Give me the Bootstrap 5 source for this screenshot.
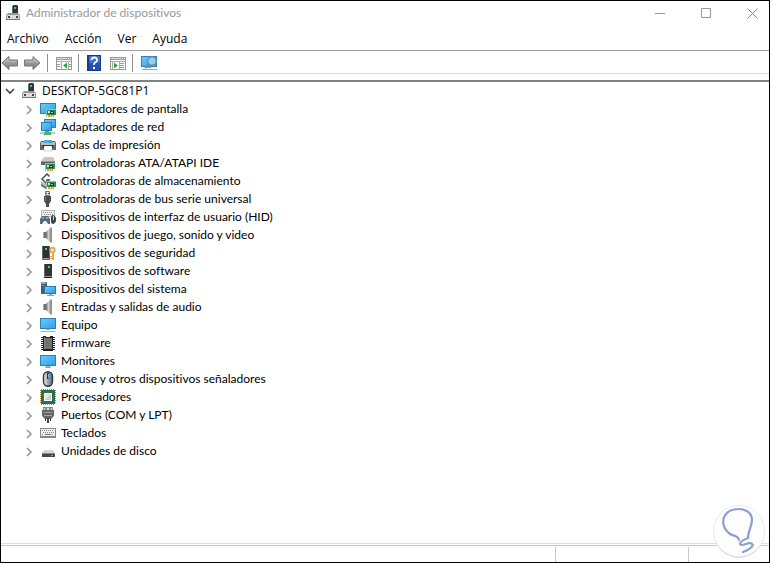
<!DOCTYPE html>
<html lang="es">
<head>
<meta charset="utf-8">
<meta name="viewport" content="width=device-width, initial-scale=1">
<title>Administrador de dispositivos</title>
<link rel="stylesheet" href="https://cdn.jsdelivr.net/npm/bootstrap@5.3.0/dist/css/bootstrap.min.css">
<style>
body { font-family: Lato, "Open Sans", sans-serif; font-size: 12px; line-height: 18px; font-variant-ligatures: none; color: #000; }
.window { border: 1px solid #000; background: #fff; }
button { border: 0; background: none; padding: 0; color: inherit; }
svg { display: block; flex: none; }
.titlebar { height: 24px; padding-left: 4px; }
.titlebar h1 { font-size: 12px; line-height: 18px; color: #999; font-weight: 400; margin-left: 5px; }
.caption-btns { margin-right: -6px; }
.caption-btn { width: 46px; height: 24px; display: flex; align-items: center; justify-content: center; }
.menubar { height: 26px; padding: 2px 6px 0; gap: 16px; border-bottom: 1px solid #a0a0a0; font-family: "Open Sans", sans-serif; }
.toolbar { height: 23px; gap: 6px; border-bottom: 1px solid #dadada; padding-top: 2px; }
.tool-sep { width: 1px; height: 18px; background: #8e8e8e; margin-right: 2px; }
.tool-gap { margin-left: 3px; }
.tree-pane { margin-top: 6px; border-top: 2px solid #828282; }
.tree-root { height: 18px; padding-left: 3px; }
.root-icon { margin: 0 5px; }
.root-label { font-family: "Open Sans", sans-serif; }
.tree-row { height: 18px; padding-left: 23px; }
.tree-row .twisty { width: 11px; margin-right: 5px; padding-top: 2px; }
.tree-row .node-icon { margin-right: 5px; }
.statusbar { height: 19px; border-top: 1px solid #dfdfdf; padding-top: 1px; }
.status-cells { border-top: 1px solid #c6c6c6; padding-top: 1px; }
.status-cell + .status-cell { border-left: 1px solid #c6c6c6; }
.cell-mid { width: 133px; }
.cell-end { width: 81px; }
.tip-badge { right: 4px; bottom: 3px; }
</style>
</head>
<body>
<svg width="0" height="0" class="position-absolute" aria-hidden="true">
<defs>
<linearGradient id="blue" x1="0" y1="0" x2="1" y2="1"><stop offset="0" stop-color="#6cc8fb"/><stop offset="1" stop-color="#2aa2f0"/></linearGradient>
<linearGradient id="metal"><stop offset="0" stop-color="#6d6d6d"/><stop offset=".5" stop-color="#d0d0d0"/><stop offset="1" stop-color="#8a8a8a"/></linearGradient>
<linearGradient id="grayArrow" x1="0" y1="0" x2="0" y2="1"><stop offset="0" stop-color="#c0c0c0"/><stop offset="1" stop-color="#777"/></linearGradient>
<linearGradient id="mouseGrad"><stop offset="0" stop-color="#eee"/><stop offset=".5" stop-color="#9aa6b3"/><stop offset="1" stop-color="#626b76"/></linearGradient>
<symbol id="chip-card" viewBox="0 0 10 8"><path fill="#2b8a55" d="M0 0h10v6H0z"/><path fill="#8cc4a2" d="M0 0h1v8H0zM1 0h9v1H1z"/><path fill="#d7e8de" d="M2 2h2v2H2z"/><path fill="#0a4a36" d="M4 2h4v3H4z"/><path fill="#8dc9b0" d="M5 3h2v1H5z"/><path fill="#f39a16" d="M2 6h6v2H2z"/><path fill="#ffc65c" d="M4 6h1v2H4zM6 6h1v2H6z"/></symbol>
<symbol id="chev" viewBox="0 0 11 12"><path d="M3 2l4 4-4 4" fill="none" stroke="#999" stroke-width="1.600"/></symbol>
<symbol id="computer" viewBox="0 0 16 16"><path fill="#333" d="M8 0h4l1 1v8H8z"/><path fill="#666" d="M7 1h1v8H7z"/><path fill="#39d353" d="M9 2h2v2H9z"/><path fill="#9a9a9a" d="M3 8h10l2 2v5H1v-5z"/><path fill="#dcdcdc" d="M2 10h12v4H2z"/><path fill="#777" d="M1 14h14v1H1z"/><path fill="#444" d="M3 11h2v2H3zM11 11h2v2h-2z"/></symbol>
<symbol id="display" viewBox="0 0 16 16"><path fill="#317fb0" d="M0 2h16v11H0z"/><path fill="url(#blue)" d="M1 3h14v9H1z"/><use href="#chip-card" x="6" y="8" width="10" height="8"/></symbol>
<symbol id="network" viewBox="0 0 16 16"><path fill="#317fb0" d="M4 0h12v9H4z"/><path fill="url(#blue)" d="M5 1h10v7H5z"/><path fill="#317fb0" d="M1 3h11v9H1z"/><path fill="url(#blue)" d="M2 4h9v7H2z"/><path fill="#a7dcb7" d="M0 13h15v2H0z"/><path fill="#4fb06f" d="M5 12h4v1h2v3H4v-3h1z"/></symbol>
<symbol id="printer" viewBox="0 0 16 16"><path fill="#666" d="M1 4h14l1 2v7H0V6z"/><path fill="#b4bcc3" d="M1 5h14v3H1z"/><path fill="#48afe5" d="M4 3h8v3H4z"/><path fill="#37aa66" d="M9 4h3v2H9z"/><path fill="#222" d="M3 8h10v3H3z"/><path fill="#fff" stroke="#aaa" stroke-width=".5" d="M4 9h8v5H4z"/></symbol>
<symbol id="ata" viewBox="0 0 16 16"><path fill="#c8c8c8" d="M4 2h9l2 4H1z"/><path fill="#606060" d="M1 6h14v4H1z"/><path fill="#999" d="M1 6h14v1H1z"/><use href="#chip-card" x="5" y="8" width="10" height="8"/></symbol>
<symbol id="storage" viewBox="0 0 16 16"><path fill="#bbb" d="M1 8l5 3v4l-5-3z"/><path fill="#666" d="M1 11l5 3v2l-5-3z"/><path fill="#fff" stroke="#4d4d4d" stroke-width="1.500" d="M9.500 3.500L7 1 2 6l4 4 3-3H6"/><use href="#chip-card" x="6" y="8" width="10" height="8"/></symbol>
<symbol id="usb" viewBox="0 0 16 16"><path fill="#ddd" stroke="#777" d="M5.500.500h4v4h-4z"/><path fill="#555" d="M6 2h1v1H6zM8 2h1v1H8z"/><path fill="#4c4c4c" d="M4 5h7v5l-2 3v3H6v-3l-2-3z"/><path fill="#777" d="M5 6h1v4H5z"/></symbol>
<symbol id="hid" viewBox="0 0 16 16"><path fill="#b7b7b7" d="M1 1h14v7H1z"/><path fill="#eee" d="M2 2h12v5H2z"/><path stroke="#888" stroke-dasharray="1 1" d="M3 3.500h10M4 5.500h9"/><path fill="#606872" d="M2 7h6l2 3v5H8l-2-3H4l-2 3H0v-5z"/><path fill="#60aee8" d="M2 8h2v2H2zM6 8h2v2H6z"/><path fill="#3f4347" d="M11 9q0-3 2-3t3 3v3q-1 3-3 3t-2-3z"/><path fill="#ccc" d="M13 7h1v4h-1z"/></symbol>
<symbol id="speaker" viewBox="0 0 16 16"><path fill="#69747b" d="M3 5h3v6H3z"/><path fill="#aaa" d="M3 5h1v6H3z"/><path fill="url(#metal)" d="M6 5l5-5v16l-5-5z"/><path fill="#8a9299" d="M11 0l1 1v14l-1 1z"/></symbol>
<symbol id="tower" viewBox="0 0 16 16"><path fill="#666" d="M4 1h8v14H4z"/><path fill="#333" d="M5 1h7v12H5z"/><path fill="#32e052" d="M8 3h2v2H8z"/><path fill="#999" d="M4 13h8v2H4z"/><path fill="#222" d="M4 14h8v1H4z"/></symbol>
<symbol id="security" viewBox="0 0 16 16"><path fill="#666" d="M2 1h8v14H2z"/><path fill="#303030" d="M3 1h6v12H3z"/><path fill="#32e052" d="M5 3h2v2H5z"/><path fill="#999" d="M2 13h7v1H2z"/><circle cx="12.500" cy="5" r="2.200" fill="#fff" stroke="#e5a850" stroke-width="2"/><path fill="#e5a850" d="M12 8h2v7h-2zM10 11h2v1h-2zM10 13h2v1h-2z"/></symbol>
<symbol id="system" viewBox="0 0 16 16"><path fill="#525b62" d="M1 1h6v12H1z"/><path fill="#9ba4aa" d="M1 1h5v2H1z"/><path fill="#35d45b" d="M2 4h2v1H2z"/><path fill="#2379ad" d="M4 5h12v8H4z"/><path fill="url(#blue)" d="M5 6h10v6H5z"/><path fill="#89a5b6" d="M9 13h3v1h2v1H7v-1h2z"/></symbol>
<symbol id="pc" viewBox="0 0 16 16"><path fill="#317fb0" d="M0 1h16v11H0z"/><path fill="url(#blue)" d="M1 2h14v9H1z"/><path fill="#9fb2c0" d="M6 12h4v1H6zM1 14h14l1 1H0z"/></symbol>
<symbol id="firmware" viewBox="0 0 16 16"><path fill="#222" d="M3 1h3v1h4V1h3v15H3z"/><path fill="#707070" d="M4 3h8v11H4z"/><path stroke="#222" stroke-width="2" stroke-dasharray="1 1" d="M2 2v13M14 2v13"/><path fill="#888" d="M4 2h1v12H4z"/></symbol>
<symbol id="monitor" viewBox="0 0 16 16"><path fill="#317fb0" d="M0 2h16v11H0z"/><path fill="url(#blue)" d="M1 3h14v9H1z"/><path fill="#8faaba" d="M6 13h4v1H6zM5 14h6v1H5z"/></symbol>
<symbol id="mouse" viewBox="0 0 16 16"><rect x="3.500" y=".7" width="9" height="14.500" rx="4.500" fill="url(#mouseGrad)" stroke="#333" stroke-width="1.400"/><path fill="#263746" d="M7 2h2v6H7z"/><path fill="#70b5e5" d="M8 3h1v4H8z"/></symbol>
<symbol id="cpu" viewBox="0 0 16 16"><path fill="none" stroke="#bd8c37" stroke-dasharray="1 1" d="M.5 1v14M15.500 1v14M1 .5h14M1 15.500h14"/><path fill="#26724a" d="M1 1h14v14H1z"/><path fill="#fff" d="M4 4h8v8H4z"/><path fill="#ccc" d="M5 5h6v6H5z"/><path fill="#e5e5e5" d="M5 5h6l-6 6z"/></symbol>
<symbol id="port" viewBox="0 0 16 16"><path fill="#888" d="M3 0h10v4H3z"/><path fill="#ddd" d="M4 1h1v2H4zM7 1h2v2H7zM11 1h1v2h-1z"/><path fill="#666" d="M2 3h12v6l-3 3H5L2 9z"/><path fill="#a4a4a4" d="M4 5h8v1H4zM4 8h8v1H4z"/><path fill="#444" d="M5 11h1v3H5zM7 11h2v5H7zM10 11h1v3h-1z"/></symbol>
<symbol id="keyboard" viewBox="0 0 16 16"><path fill="#888" d="M0 3h16v10H0z"/><path fill="#eee" d="M1 4h14v7H1z"/><path stroke="#888" stroke-dasharray="1 1" d="M2 5.500h12M3 7.500h11M2 9.500h2M12 9.500h2"/><path fill="#777" d="M5 9h6v1H5z"/></symbol>
<symbol id="disk" viewBox="0 0 16 16"><path fill="#d4d4d4" d="M4 7h9l2 3H2z"/><path fill="#474747" d="M2 10h13v4H2z"/><path fill="#888" d="M2 10h13v1H2z"/><path fill="#36d858" d="M11 12h2v1h-2z"/></symbol>
<symbol id="arrow" viewBox="0 0 17 16"><path fill="url(#grayArrow)" stroke="#777" d="M1 8l7-6.500v3.500h8.500v6H8v3.500z"/><path fill="none" stroke="#bbb" d="M3 8l4-4v2.500h8"/></symbol>
<symbol id="panel" viewBox="0 0 16 15"><path fill="#999" d="M0 1h16v13H0z"/><path fill="#fff" d="M1 4h14v9H1z"/><path fill="#ddd" d="M1 2h10v1H1z"/><path fill="#fff" d="M12 2h1v1h-1zM14 2h1v1h-1z"/><path fill="#aaa" d="M1 5h14v1H1z"/></symbol>
</defs>
</svg>

<main class="window vh-100 d-flex flex-column position-relative overflow-hidden">
  <header class="titlebar d-flex align-items-center">
    <svg width="16" height="16" aria-hidden="true"><use href="#computer"/></svg>
    <h1 class="mb-0 me-auto">Administrador de dispositivos</h1>
    <div class="caption-btns d-flex">
      <button class="caption-btn" type="button" aria-label="Minimizar"><svg width="11" height="11"><path d="M0 5.500h10" stroke="#999"/></svg></button>
      <button class="caption-btn" type="button" aria-label="Maximizar"><svg width="11" height="11"><path d="M.5.500h9v9h-9z" fill="none" stroke="#999"/></svg></button>
      <button class="caption-btn" type="button" aria-label="Cerrar"><svg width="11" height="11"><path d="M.5.500l10 10M10.500.500l-10 10" stroke="#888"/></svg></button>
    </div>
  </header>

  <nav class="menubar d-flex align-items-center" aria-label="Menú">
    <button type="button">Archivo</button>
    <button type="button">Acción</button>
    <button type="button">Ver</button>
    <button type="button">Ayuda</button>
  </nav>

  <div class="toolbar d-flex align-items-center" role="toolbar" aria-label="Herramientas">
    <button type="button" aria-label="Atrás"><svg width="17" height="16"><use href="#arrow"/></svg></button>
    <button type="button" aria-label="Adelante"><svg width="17" height="16" viewBox="0 0 17 16"><g transform="translate(17 0) scale(-1 1)"><use href="#arrow" width="17" height="16"/></g></svg></button>
    <span class="tool-sep flex-shrink-0"></span>
    <button type="button" aria-label="Mostrar u ocultar el árbol"><svg width="16" height="15" viewBox="0 0 16 15"><use href="#panel"/><path fill="#aaa" d="M5 6h1v7H5zM12 6h1v7h-1z"/><path stroke="#999" d="M1 8.500h3M1 10.500h3M13 8.500h2M13 10.500h2"/><path fill="#28a745" d="M11 6.500v6l-4-3z"/></svg></button>
    <span class="tool-sep flex-shrink-0"></span>
    <button type="button" aria-label="Ayuda"><svg width="14" height="16" viewBox="0 0 14 16"><path fill="#173b88" d="M0 0h14v16H0z"/><path fill="#416fcc" d="M2 1h11v14H2z"/><path fill="#2451af" d="M2 8h11v7H2z"/><path d="M4.500 5Q4.500 2.500 7.300 2.500T10 5q0 1.500-1.700 2.500T7 10" fill="none" stroke="#fff" stroke-width="1.800"/><path fill="#fff" d="M6 12h2v2H6z"/></svg></button>
    <button type="button" aria-label="Panel de acciones" class="tool-gap"><svg width="16" height="15" viewBox="0 0 16 15"><use href="#panel"/><path fill="#aaa" d="M2 6h1v7H2zM9 6h1v7H9z"/><path stroke="#999" d="M10 7.500h4M10 9.500h4M10 11.500h4"/><path fill="#28a745" d="M4 6.500v6l4-3z"/></svg></button>
    <span class="tool-sep flex-shrink-0"></span>
    <button type="button" aria-label="Buscar cambios de hardware"><svg width="18" height="16" viewBox="0 0 18 16"><path fill="#3185b5" d="M0 1h16v11H0z"/><path fill="url(#blue)" d="M1 2h14v9H1z"/><path fill="#8eaabd" d="M6 12h4v1H6zM1 14h15v1H1z"/><circle cx="11" cy="6" r="4.200" fill="#8fd0f7" stroke="#718b9d" stroke-width="1.300"/><path d="M8 9l-4 4" stroke="#7b8a96" stroke-width="2"/></svg></button>
  </div>

  <section class="tree-pane flex-grow-1" aria-label="Dispositivos">
    <div class="tree-root d-flex align-items-center">
      <button type="button" aria-label="Contraer DESKTOP-5GC81P1"><svg width="12" height="12"><path d="M2 4l4 4 4-4" fill="none" stroke="#444" stroke-width="1.600"/></svg></button>
      <svg class="root-icon" width="16" height="16" aria-hidden="true"><use href="#computer"/></svg>
      <span class="root-label">DESKTOP-5GC81P1</span>
    </div>
    <ul class="list-unstyled mb-0" id="devices"></ul>
  </section>

  <footer class="statusbar d-flex flex-column" aria-label="Barra de estado">
    <div class="status-cells d-flex flex-grow-1">
      <div class="status-cell flex-grow-1"></div>
      <div class="status-cell cell-mid"></div>
      <div class="status-cell cell-end"></div>
    </div>
  </footer>

  <svg class="tip-badge position-absolute" width="52" height="54" viewBox="0 0 52 54" aria-hidden="true">
    <circle cx="26" cy="28" r="25" fill="#ddd"/>
    <circle cx="26" cy="26" r="25.500" fill="#fff" fill-opacity=".96" stroke="#e4e9f3"/>
    <path d="M26 35C25 30 20 31 17 29C11 25 9 18 11 12C14 6 20 4 26 4C33 4 39 8 39 15C39 21 35 26 35 33Q27 36 27 39Q28 41 33 39T40 40Q38 44 30 47" fill="none" stroke="#8c9ed2" stroke-width="2.200" stroke-linecap="round" stroke-linejoin="round"/>
  </svg>
</main>

<script src="https://cdn.jsdelivr.net/npm/bootstrap@5.3.0/dist/js/bootstrap.bundle.min.js"></script>
<script>
const devices = [
  ["display", "Adaptadores de pantalla"], ["network", "Adaptadores de red"],
  ["printer", "Colas de impresión"], ["ata", "Controladoras ATA/ATAPI IDE"],
  ["storage", "Controladoras de almacenamiento"], ["usb", "Controladoras de bus serie universal"],
  ["hid", "Dispositivos de interfaz de usuario (HID)"], ["speaker", "Dispositivos de juego, sonido y video"],
  ["security", "Dispositivos de seguridad"], ["tower", "Dispositivos de software"],
  ["system", "Dispositivos del sistema"], ["speaker", "Entradas y salidas de audio"],
  ["pc", "Equipo"], ["firmware", "Firmware"], ["monitor", "Monitores"],
  ["mouse", "Mouse y otros dispositivos señaladores"], ["cpu", "Procesadores"],
  ["port", "Puertos (COM y LPT)"], ["keyboard", "Teclados"], ["disk", "Unidades de disco"]
];
document.getElementById("devices").innerHTML = devices.map(([icon, name]) =>
  `<li class="tree-row d-flex align-items-center">
    <button class="twisty" type="button" aria-label="Expandir ${name}"><svg width="11" height="12"><use href="#chev"/></svg></button>
    <svg class="node-icon" width="16" height="16" aria-hidden="true"><use href="#${icon}"/></svg>
    <span>${name}</span>
  </li>`).join("");
</script>
</body>
</html>
